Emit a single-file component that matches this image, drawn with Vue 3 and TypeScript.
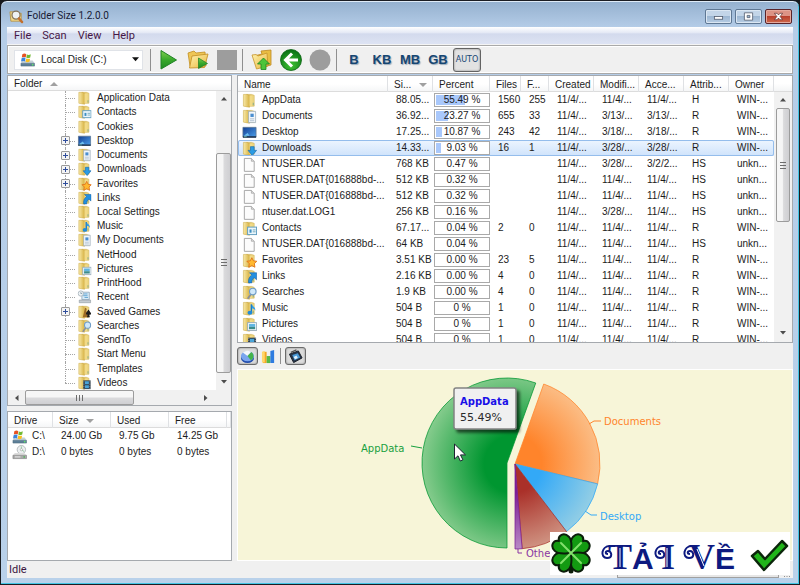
<script setup lang="ts">
interface TreeNode { name: string; overlay?: string; expandable?: boolean }
interface Entry {
  name: string; icon: string; size: string; percent: string; fill: number
  files: string; folders: string; created: string; modified: string; accessed: string; attr: string; owner: string
}
interface Slice { name: string; value: number; color: string; edge: string; cx: number; cy: number }

const tree: TreeNode[] = [
  { name: 'Application Data' },
  { name: 'Contacts', overlay: 'card' },
  { name: 'Cookies' },
  { name: 'Desktop', overlay: 'desktop', expandable: true },
  { name: 'Documents', overlay: 'doc', expandable: true },
  { name: 'Downloads', overlay: 'down', expandable: true },
  { name: 'Favorites', overlay: 'star', expandable: true },
  { name: 'Links', overlay: 'link' },
  { name: 'Local Settings' },
  { name: 'Music', overlay: 'note' },
  { name: 'My Documents', overlay: 'doc' },
  { name: 'NetHood' },
  { name: 'Pictures', overlay: 'picture' },
  { name: 'PrintHood' },
  { name: 'Recent', overlay: 'recent' },
  { name: 'Saved Games', overlay: 'game', expandable: true },
  { name: 'Searches', overlay: 'lens' },
  { name: 'SendTo' },
  { name: 'Start Menu' },
  { name: 'Templates' },
  { name: 'Videos', overlay: 'film' },
]

const row = (
  name: string, icon: string, size: string, percent: string, fill: number, files: string, folders: string,
  modified = '11/4/...', accessed = '11/4/...', attr = 'R', owner = 'WIN-...',
): Entry => ({ name, icon, size, percent, fill, files, folders, created: '11/4/...', modified, accessed, attr, owner })

const entries: Entry[] = [
  row('AppData', 'plain', '88.05...', '55.49 %', 55.49, '1560', '255', '11/4/...', '11/4/...', 'H'),
  row('Documents', 'doc', '36.92...', '23.27 %', 23.27, '655', '33', '3/13/...', '3/13/...'),
  row('Desktop', 'desktop', '17.25...', '10.87 %', 10.87, '243', '42', '3/18/...', '3/18/...'),
  row('Downloads', 'down', '14.33...', '9.03 %', 9.03, '16', '1', '3/28/...', '3/28/...'),
  row('NTUSER.DAT', 'file', '768 KB', '0.47 %', 0, '', '', '3/28/...', '3/2/2...', 'HS', 'unkn...'),
  row('NTUSER.DAT{016888bd-...', 'file', '512 KB', '0.32 %', 0, '', '', '11/4/...', '11/4/...', 'HS', 'unkn...'),
  row('NTUSER.DAT{016888bd-...', 'file', '512 KB', '0.32 %', 0, '', '', '11/4/...', '11/4/...', 'HS', 'unkn...'),
  row('ntuser.dat.LOG1', 'file', '256 KB', '0.16 %', 0, '', '', '3/28/...', '11/4/...', 'HS', 'unkn...'),
  row('Contacts', 'card', '67.17...', '0.04 %', 0, '2', '0'),
  row('NTUSER.DAT{016888bd-...', 'file', '64 KB', '0.04 %', 0, '', '', '11/4/...', '11/4/...', 'HS', 'unkn...'),
  row('Favorites', 'star', '3.51 KB', '0.00 %', 0, '23', '5'),
  row('Links', 'link', '2.16 KB', '0.00 %', 0, '4', '0'),
  row('Searches', 'lens', '1.9 KB', '0.00 %', 0, '4', '0'),
  row('Music', 'note', '504 B', '0 %', 0, '1', '0'),
  row('Pictures', 'picture', '504 B', '0 %', 0, '1', '0'),
  row('Videos', 'film', '504 B', '0 %', 0, '1', '0'),
]

const standalone = ['file', 'desktop', 'recent']
const hasFolder = (icon?: string) => !icon || !standalone.includes(icon)

const drives = [
  { name: 'C:\\', icon: 'drive-win', size: '24.00 Gb', used: '9.75 Gb', free: '14.25 Gb' },
  { name: 'D:\\', icon: 'drive-cd', size: '0 bytes', used: '0 bytes', free: '0 bytes' },
]

const slices: Slice[] = [
  { name: 'AppData', value: 55.49, color: '#009630', edge: '#84cb8c', cx: 269, cy: 93 },
  { name: 'Documents', value: 23.27, color: '#ff842b', edge: '#fbc08a', cx: 277, cy: 94 },
  { name: 'Desktop', value: 10.87, color: '#33a9f7', edge: '#98d0e4', cx: 277, cy: 94 },
  { name: 'Downloads', value: 9.03, color: '#aa3029', edge: '#d29a88', cx: 277, cy: 94 },
  { name: 'Others', value: 1.34, color: '#7c1f96', edge: '#bd93c8', cx: 277, cy: 94 },
]
const radius = 85
let angle = Math.PI
const wedges = slices.map((s) => {
  const a = angle
  const b = a + (s.value / 100) * Math.PI * 2
  angle = b
  const at = (t: number) => `${s.cx + radius * Math.sin(t)} ${s.cy - radius * Math.cos(t)}`
  return { ...s, d: `M${s.cx} ${s.cy}L${at(a)}A${radius} ${radius} 0 ${s.value > 50 ? 1 : 0} 1 ${at(b)}Z` }
})
const labels = [
  { text: 'AppData', x: 123, y: 82, color: '#17a03e', line: '173,76 184,78' },
  { text: 'Documents', x: 366, y: 55, color: '#ff842b', line: '351,54 356,51 363,51' },
  { text: 'Desktop', x: 362, y: 150, color: '#33a9f7', line: '347,141 353,145 359,145' },
  { text: 'Others', x: 288, y: 187, color: '#8a35a2', line: '280,179 280,183 284,183' },
]
const leaves = [45, 135, 225, 315]
</script>

<template>
  <svg class="defs" aria-hidden="true">
    <defs>
      <linearGradient id="gFold" x1="0" x2="1"><stop offset="0" stop-color="#f8e9a8" /><stop offset="1" stop-color="#d8b344" /></linearGradient>
      <linearGradient id="gBack" x1="0" x2="1"><stop offset="0" stop-color="#dcbb55" /><stop offset="1" stop-color="#f1dc8c" /></linearGradient>
      <linearGradient id="gPlay" x1="0" y1="0" x2="0" y2="1"><stop offset="0" stop-color="#7fd04e" /><stop offset=".5" stop-color="#39a92c" /><stop offset="1" stop-color="#1e8a22" /></linearGradient>
      <radialGradient id="gBall" cx=".5" cy=".75" r=".7"><stop offset="0" stop-color="#3fc233" /><stop offset="1" stop-color="#0b7416" /></radialGradient>
      <linearGradient id="gBlue" x1="0" y1="0" x2="1" y2="1"><stop offset="0" stop-color="#123e93" /><stop offset="1" stop-color="#4da0ea" /></linearGradient>
      <linearGradient id="gOpen" x1="0" y1="0" x2="1" y2="1"><stop offset="0" stop-color="#fff3b0" /><stop offset="1" stop-color="#e8b63c" /></linearGradient>
    </defs>
    <symbol id="folder" viewBox="0 0 16 16">
      <path d="M5 1.500h5l3 1v11.500H5z" fill="url(#gBack)" stroke="#cdab48" stroke-width=".6" />
      <path d="M1.500 1.500h4L8 3v12.200L1.500 14z" fill="url(#gFold)" stroke="#cdab48" stroke-width=".6" />
      <path d="M8 3h3v11H8z" fill="#f2da86" />
      <path d="M11.500 10.500h1v2.500h-1z" fill="#7fa98b" />
    </symbol>
    <symbol id="file" viewBox="0 0 16 16"><path d="M2.500 1.500h7.500l3 3v10.800H2.500z" fill="#fcfcfc" stroke="#a3a3a3" /><path d="M10 1.500v3h3" fill="#ddd" stroke="#a3a3a3" stroke-width=".8" /></symbol>
    <symbol id="desktop" viewBox="0 0 16 16"><path d="M1 2.500h14v10.500H1z" fill="url(#gBlue)" stroke="#56708c" stroke-width=".8" /><path d="M1 12h14v1.500H1z" fill="#1b2c44" /><path d="M2 11.500l4-3 2 3z" fill="#6fc0ef" /><rect x="2" y="12" width="3" height="1" fill="#6fb9a6" /></symbol>
    <symbol id="card" viewBox="0 0 16 16"><rect x="6" y="6.500" width="9.500" height="8" fill="#eaf6fc" stroke="#5e9cc0" /><rect x="8" y="9" width="2.200" height="3.500" fill="#3d8fc2" /><path d="M11.500 9.500h3M11.500 11.500h3" stroke="#7ab" /></symbol>
    <symbol id="doc" viewBox="0 0 16 16"><path d="M7 2.500h7.500v12H7z" fill="#f2f7fb" stroke="#9aa9b6" stroke-width=".8" /><rect x="9" y="5" width="3.500" height="3.500" fill="#4a8ed0" /><path d="M8.500 10.500h4.500M8.500 12.500h4.500" stroke="#9fb2c6" stroke-width=".8" /></symbol>
    <symbol id="down" viewBox="0 0 16 16"><path d="M9 6h4v4h2.500L11 15.500 6.500 10H9z" fill="#2b9be4" stroke="#1269ad" stroke-width=".7" /></symbol>
    <symbol id="star" viewBox="0 0 16 16"><path d="M10.500 5l1.700 3.400 3.600.4-2.600 2.600.6 3.800-3.300-1.800-3.300 1.800.6-3.800-2.600-2.600 3.600-.4z" fill="#ffb931" stroke="#dd6d17" stroke-width=".9" /></symbol>
    <symbol id="link" viewBox="0 0 16 16"><path d="M8 4h7.500v7.500L13 9.300c-2 1.400-2.600 3-2.500 5.500H7c-.5-4 .8-6.500 3.300-8.500z" fill="#238fe0" stroke="#0e5da3" stroke-width=".6" /></symbol>
    <symbol id="note" viewBox="0 0 16 16"><path d="M10 3.500v8.500" stroke="#1578c8" stroke-width="1.600" /><path d="M10.500 3.500c.5 2.500 4.500 3 3.500 7-.6-2-2-2.500-3.500-2.700z" fill="#2f9de8" /><ellipse cx="8.500" cy="12.500" rx="2.600" ry="2.200" fill="#218bda" /></symbol>
    <symbol id="picture" viewBox="0 0 16 16"><rect x="6" y="6" width="9.500" height="8.500" fill="#eef5f8" stroke="#93a9b8" stroke-width=".9" /><path d="M7.500 7.500h6.500v3H7.500z" fill="#5fb5e2" /><path d="M7.500 10.500h6.500v2.500H7.500z" fill="#3c8c8c" /></symbol>
    <symbol id="game" viewBox="0 0 16 16"><path d="M8.500 3c2 0 2.600 2 1.500 3.500l1.500 3.500 1 4H6l1-4z" fill="#9c6a24" /><path d="M12.500 5l3 4.500c0 2-1.600 2-2.200 1.500l.9 3h-3.400l.9-3c-.8.5-2 0-2-1.500z" fill="#1d1d1d" /></symbol>
    <symbol id="lens" viewBox="0 0 16 16"><path d="M9.500 10L6.500 14" stroke="#8a8f98" stroke-width="1.800" stroke-linecap="round" /><circle cx="11.500" cy="7" r="3.500" fill="#cfe8fa" stroke="#6f9cc6" stroke-width="1.200" /></symbol>
    <symbol id="film" viewBox="0 0 16 16"><rect x="6.500" y="5" width="8.500" height="10" fill="#2d3b48" /><path d="M8.500 6h4.500v3.500H8.500zM8.500 10.500h4.500v3.500H8.500z" fill="#4aa4d8" /><path d="M7.300 5.500v9M14.200 5.500v9" stroke="#b8c4cc" stroke-width=".8" stroke-dasharray="1 1" /></symbol>
    <symbol id="recent" viewBox="0 0 16 16"><path d="M5 2.500h8.500V11H5z" fill="#d8ecf8" stroke="#7f9ab0" stroke-width=".8" /><path d="M6.500 4.500h5M6.500 6.500h5M8 8.500h4" stroke="#4795cb" stroke-width=".9" /><path d="M2 11.500h13v3H2z" fill="#c5ccd2" stroke="#8f999f" stroke-width=".7" /><circle cx="3.800" cy="4" r="3" fill="#eef3f6" stroke="#9aa7b0" stroke-width=".8" /><path d="M3.800 2.500V4h1.500" stroke="#578" stroke-width=".7" fill="none" /></symbol>
    <symbol id="drive-win" viewBox="0 0 16 16"><path d="M2.500 9h11l2 3H1z" fill="#c5d0d8" /><path d="M1 12h14.500v3H1z" fill="#5d7f98" stroke="#496879" stroke-width=".5" /><circle cx="13.500" cy="13.500" r=".9" fill="#5fe06b" /><path d="M2.500 2.500c1.500-1 3-1 4.200-.2l-.6 3.500c-1.300-.7-2.700-.6-4.200.1z" fill="#e65222" /><path d="M7.300 2.600c1.300.7 2.700.6 4.200-.1l-.6 3.400c-1.400.8-2.900.9-4.200.2z" fill="#72b933" /><path d="M1.700 6.700c1.500-.9 3-.9 4.200-.2l-.6 3.500c-1.300-.7-2.700-.6-4.200.1z" fill="#3a84dc" /><path d="M6.600 6.900c1.300.7 2.700.6 4.200-.1l-.6 3.400c-1.400.8-2.900.9-4.200.2z" fill="#fbbf1c" /></symbol>
    <symbol id="drive-cd" viewBox="0 0 16 16"><circle cx="10" cy="5" r="4.500" fill="#eceff0" stroke="#a5abae" stroke-width=".8" /><path d="M10 5V1.500M10 5l3 2" stroke="#8fc79a" /><circle cx="10" cy="5" r="1.200" fill="#fff" stroke="#999" stroke-width=".6" /><path d="M3 8.500h10l2.500 2.500H1z" fill="#dcdcdc" /><path d="M1 11h14.500v3.500H1z" fill="#a9a9a9" stroke="#7a7a7a" stroke-width=".6" /><path d="M3 12.700h6" stroke="#eee" /><circle cx="13" cy="12.700" r=".9" fill="#54b35c" /></symbol>
    <symbol id="open" viewBox="0 0 22 22"><path d="M1 4l6-2 2 2 9-1 1 14H3z" fill="#eec655" stroke="#c28e20" stroke-width=".8" /><path d="M5 7l16-2-3.500 13.500L2.500 19z" fill="url(#gOpen)" stroke="#c6932a" stroke-width=".9" /></symbol>
  </svg>

  <div class="window">
    <header class="title">
      <svg class="app-icon" viewBox="0 0 16 16"><path d="M1 3h5l1 1.500h6V13H2z" fill="#f1d98b" stroke="#b08a3a" stroke-width=".8" /><circle cx="7.500" cy="6.500" r="4.300" fill="#eef2f4" stroke="#82725a" stroke-width="1.300" /><path d="M10.500 10l3.500 4" stroke="#c2702e" stroke-width="2.500" stroke-linecap="round" /></svg>
      <h1>Folder Size 1.2.0.0</h1>
      <button class="win-btn" aria-label="Minimize"><svg viewBox="0 0 12 12"><rect x="1.500" y="6" width="9" height="3" fill="#fff" stroke="#555f70" stroke-width=".9" /></svg></button>
      <button class="win-btn" aria-label="Maximize"><svg viewBox="0 0 12 12"><path d="M1.500 2h9v8h-9zM4.500 4.800v2.400h3V4.800z" fill="#fff" fill-rule="evenodd" stroke="#555f70" stroke-width=".9" /></svg></button>
      <button class="win-btn close" aria-label="Close"><svg viewBox="0 0 12 12"><path d="M1.500 2.500h3L6 4.300l1.500-1.800h3L7.800 6l2.700 3.500h-3L6 7.700 4.500 9.500h-3L4.200 6z" fill="#fff" stroke="#5e3030" stroke-width=".8" /></svg></button>
    </header>

    <nav class="menu"><button>File</button><button>Scan</button><button>View</button><button>Help</button></nav>

    <div class="toolbar">
      <label class="combo">
        <svg class="ico" viewBox="0 0 16 16"><use href="#drive-win" /></svg>
        <select aria-label="Drive"><option>Local Disk (C:)</option></select>
        <svg class="arrow" viewBox="0 0 6 4"><path d="M0 0h6L3 3.500z" fill="#111" /></svg>
      </label>
      <i class="sep"></i>
      <button class="tool" aria-label="Start scan"><svg viewBox="0 0 22 22"><path d="M3 1.500v18.500L18.500 11z" fill="url(#gPlay)" stroke="#208326" stroke-linejoin="round" /></svg></button>
      <button class="tool" aria-label="Scan folder"><svg viewBox="0 0 22 22"><use href="#open" /><path d="M11.500 9v10.500L20.500 14.500z" fill="url(#gPlay)" stroke="#1e7d24" stroke-width=".7" /></svg></button>
      <button class="tool" aria-label="Stop"><svg viewBox="0 0 22 22"><rect x="1" y="1" width="20" height="20" fill="#9d9d9d" /></svg></button>
      <i class="sep mid"></i>
      <button class="tool" aria-label="Parent folder"><svg viewBox="0 0 22 22"><path d="M3 7l8-2-1-3 10-1v15l-8 2z" fill="#e9bd43" stroke="#bd8820" stroke-width=".8" /><path d="M1 6l4-.5 2 1.500 9-3 1 13-11.500 3z" fill="url(#gOpen)" stroke="#c6932a" stroke-width=".8" /><path d="M12.500 9l6 6h-3.500v5.500h-5V15H6.500z" fill="#4cc43a" stroke="#1c8322" stroke-width=".8" /></svg></button>
      <button class="tool" aria-label="Back"><svg viewBox="0 0 22 22"><circle cx="11" cy="11" r="10.500" fill="url(#gBall)" stroke="#0b6514" stroke-width=".8" /><path d="M12 4.500L5.500 11l6.500 6.500M6.500 11H18" fill="none" stroke="#fff" stroke-width="3" /></svg></button>
      <button class="tool" aria-label="Forward"><svg viewBox="0 0 22 22"><circle cx="11" cy="11" r="10.500" fill="#9d9d9d" /></svg></button>
      <i class="sep tight"></i>
      <button class="unit">B</button><button class="unit">KB</button><button class="unit">MB</button><button class="unit">GB</button>
      <button class="unit auto">AUTO</button>
    </div>

    <main class="workspace">
      <aside class="side">
        <section class="panel tree-panel">
          <div class="tree-head">Folder <svg class="sort" viewBox="0 0 8 4"><path d="M4 0l4 4H0z" fill="#a0a0a0" /></svg></div>
          <div class="tree-body">
            <ul class="tree">
              <li v-for="n in tree" :key="n.name">
                <span class="branch"><button v-if="n.expandable" class="plus" :aria-label="'Expand ' + n.name"></button></span>
                <svg class="ico" viewBox="0 0 16 16"><use v-if="hasFolder(n.overlay)" href="#folder" /><use v-if="n.overlay" :href="'#' + n.overlay" /></svg>
                <span>{{ n.name }}</span>
              </li>
            </ul>
            <div class="vbar tree-v">
              <svg class="tip" viewBox="0 0 6 4"><path d="M3 0l3 3.500H0z" /></svg>
              <i class="before"></i><i class="thumb"><b></b></i>
              <svg class="tip" viewBox="0 0 6 4"><path d="M0 0h6L3 3.500z" /></svg>
            </div>
          </div>
          <div class="hbar">
            <svg class="tip" viewBox="0 0 4 6"><path d="M3.500 0v6L0 3z" /></svg>
            <i class="thumb"><b></b></i><i class="after"></i>
            <svg class="tip" viewBox="0 0 4 6"><path d="M0 0v6l3.500-3z" /></svg>
          </div>
        </section>

        <section class="panel drives">
          <table>
            <colgroup><col class="d1"><col class="d2"><col class="d2"><col class="d2"><col></colgroup>
            <thead><tr><th>Drive</th><th>Size <svg class="sort" viewBox="0 0 8 4"><path d="M0 0h8L4 4z" fill="#a0a0a0" /></svg></th><th>Used</th><th>Free</th><th></th></tr></thead>
            <tbody>
              <tr v-for="d in drives" :key="d.name">
                <td><span class="named"><svg class="ico" viewBox="0 0 16 16"><use :href="'#' + d.icon" /></svg>{{ d.name }}</span></td>
                <td>{{ d.size }}</td><td>{{ d.used }}</td><td>{{ d.free }}</td><td></td>
              </tr>
            </tbody>
          </table>
        </section>
      </aside>

      <section class="detail">
        <div class="panel list">
          <table>
            <colgroup><col><col class="c-date"><col class="c-pct"><col class="c-files"><col class="c-fold"><col class="c-date"><col class="c-date"><col class="c-date"><col class="c-date"><col class="c-date"></colgroup>
            <thead>
              <tr><th>Name</th><th>Si... <svg class="sort" viewBox="0 0 8 4"><path d="M0 0h8L4 4z" fill="#a0a0a0" /></svg></th><th>Percent</th><th>Files</th><th>F...</th><th>Created</th><th>Modifi...</th><th>Acce...</th><th>Attrib...</th><th>Owner</th></tr>
            </thead>
            <tbody>
              <tr v-for="(e, i) in entries" :key="i" :class="{ selected: i === 3 }">
                <td><span class="named"><svg class="ico" viewBox="0 0 16 16"><use v-if="hasFolder(e.icon)" href="#folder" /><use v-if="e.icon !== 'plain'" :href="'#' + e.icon" /></svg>{{ e.name }}</span></td>
                <td>{{ e.size }}</td>
                <td class="pct"><span class="meter"><i v-if="e.fill" :style="{ width: e.fill + '%' }"></i><em>{{ e.percent }}</em></span></td>
                <td>{{ e.files }}</td><td>{{ e.folders }}</td><td>{{ e.created }}</td><td>{{ e.modified }}</td><td>{{ e.accessed }}</td><td>{{ e.attr }}</td><td>{{ e.owner }}</td>
              </tr>
            </tbody>
          </table>
          <div class="list-side">
            <div class="stub"></div>
            <div class="vbar list-v">
              <svg class="tip" viewBox="0 0 6 4"><path d="M3 0l3 3.500H0z" /></svg>
              <i class="thumb"><b></b></i><i class="after"></i>
              <svg class="tip" viewBox="0 0 6 4"><path d="M0 0h6L3 3.500z" /></svg>
            </div>
          </div>
        </div>

        <div class="chart-tools">
          <button class="mode on" aria-label="Pie chart"><svg viewBox="0 0 16 16"><ellipse cx="8" cy="9.500" rx="7" ry="5.500" fill="#244fae" /><ellipse cx="8" cy="7.500" rx="7" ry="5.500" fill="#7aa5ee" /><path d="M8 7.500L3 3.600A7 5.500 0 0 1 12 3.200z" fill="#f4f7fa" /><path d="M8 7.500l4-4.300a7 5.500 0 0 1-.5 8.700z" fill="#45b34b" /></svg></button>
          <button class="mode" aria-label="Bar chart"><svg viewBox="0 0 16 16"><path d="M2 3h4v12H2z" fill="#f5a623" /><path d="M6 7.500h4V15H6z" fill="#58b947" /><path d="M10 2l4-1v14h-4z" fill="#2e7be0" /><path d="M1 3l3-1v12.500H1z" fill="#ffd66b" /></svg></button>
          <i class="sep"></i>
          <button class="mode on" aria-label="Save chart"><svg viewBox="0 0 16 16"><path d="M1.500 5.500L11 2l4 7.500L6 14.500z" fill="#27364a" stroke="#131a22" /><path d="M4.500 6.500l6-2 2.500 4.500-6 3z" fill="#4b9bd8" /><path d="M6 8.500l3-1.500 1.500 2.500-3 1.500z" fill="#e3f3fd" /><path d="M3 3.500l6-2.500" stroke="#555" stroke-width="1.500" /></svg></button>
        </div>

        <div class="chart">
          <svg viewBox="0 0 554 190" role="img" aria-label="Share of each folder">
            <defs>
              <radialGradient v-for="w in wedges" :id="'w' + w.name" :key="w.name" gradientUnits="userSpaceOnUse" cx="275" cy="94" r="90">
                <stop offset=".32" :stop-color="w.color" /><stop offset="1" :stop-color="w.edge" />
              </radialGradient>
              <filter id="drop" x="-20%" y="-20%" width="150%" height="150%"><feDropShadow dx="3" dy="3" stdDeviation="1.500" flood-opacity=".6" /></filter>
            </defs>
            <path v-for="w in wedges" :key="w.name" :d="w.d" :fill="'url(#w' + w.name + ')'" :stroke="w.color" stroke-opacity=".75" stroke-linejoin="round" />
            <g v-for="l in labels" :key="l.text">
              <polyline :points="l.line" fill="none" :stroke="l.color" />
              <text :x="l.x" :y="l.y" :fill="l.color">{{ l.text }}</text>
            </g>
            <rect x="216" y="18" width="62" height="41" rx="2" fill="#f0f0f0" stroke="#828282" stroke-width="1.500" filter="url(#drop)" />
            <text class="tt-name" x="222" y="35">AppData</text>
            <text class="tt-val" x="222" y="51">55.49%</text>
            <path d="M216.500 74v15l3.500-3.200 2.300 5.200 2.600-1.200-2.400-4.900h5z" fill="#fff" stroke="#1d2433" stroke-linejoin="round" />
          </svg>
        </div>
      </section>
    </main>

    <footer class="status"><span>Idle</span><i class="progress"></i><svg class="grip" viewBox="0 0 8 8"><path d="M6 1h1v1H6zM3.500 3.500h1v1h-1zM6 3.500h1v1H6zM1 6h1v1H1zM3.500 6h1v1h-1zM6 6h1v1H6z" fill="#8f8f8f" /></svg></footer>

    <a class="banner" href="#">
      <svg viewBox="0 0 240 43">
        <path d="M21 22v17" stroke="#0b1d0b" stroke-width="5" stroke-linecap="round" />
        <path v-for="a in leaves" :key="a" :transform="`translate(21 21) rotate(${a})`" d="M0 0C-3-3-10-7-10-13C-10-20-3-22 0-17C3-22 10-20 10-13C10-7 3-3 0 0Z" fill="#139a12" stroke="#0b1d0b" stroke-width="2" stroke-linejoin="round" />
        <path d="M21 21L11 11M21 21L31 11M21 21L11 31M21 21L31 31" fill="none" stroke="#83e06c" stroke-width="2" stroke-linecap="round" />
        <g class="swash">
          <path d="M65 14h-5c-9 0-10 12-3 12 6 0 5-7 1-7-3 0-3 3 0 3" />
          <path d="M119 14h-6c-9 0-10 12-3 12 6 0 5-7 1-7-3 0-3 3 0 3" />
          <path d="M146 14h-4c-9 0-10 12-3 12 6 0 5-7 1-7-3 0-3 3 0 3" />
        </g>
        <text class="word" y="37"><tspan class="fancy" x="58">T</tspan><tspan class="block" x="82">Ả</tspan><tspan class="fancy" x="111">I</tspan> <tspan class="fancy" x="139">V</tspan><tspan class="block" x="165">Ề</tspan></text>
        <path d="M70 16v19M117 16v19M147 17l7 17" stroke="#fff" stroke-width="1" fill="none" />
        <path d="M202 24l6-5 7 8 17-18 5 5-23 24z" fill="#20b51a" stroke="#0b260b" stroke-width="2.500" stroke-linejoin="round" />
      </svg>
    </a>
  </div>
</template>

<style>
body { margin: 0; background: #16181c; }
</style>

<style scoped>
* { box-sizing: border-box; }
.defs { position: absolute; width: 0; height: 0; }
button { border: 0; background: none; padding: 0; margin: 0; font: inherit; color: inherit; display: flex; align-items: center; justify-content: center; }
svg { display: block; flex: none; }
.window {
  position: relative; display: flex; flex-direction: column; height: 100vh; padding: 0 6px 6px;
  border: 1px solid #1b1d22; border-radius: 7px 7px 0 0;
  background: linear-gradient(#94b0ce, #b5cde8 27px, #b9d1ea);
  box-shadow: inset -1px -1px #43c5e4, inset 0 1px #dfebf7;
  font: 10px/16px "Liberation Sans", Arial, sans-serif; color: #1c1c1c;
}
.title { display: flex; align-items: center; height: 26px; padding: 4px 1px 0 2px; gap: 3px; font: 10px/16px Roboto, "Open Sans", sans-serif; color: #181a33; }
.title h1 { flex: 1; margin: 0; font: inherit; }
.app-icon { width: 15px; height: 15px; }
.win-btn { width: 27px; height: 15px; border: 1px solid #5f7894; border-radius: 2px; background: linear-gradient(#c3d5e8 45%, #9db7d2 50%, #b7cde4); box-shadow: inset 0 0 0 1px #dbe7f3; }
.win-btn.close { border-color: #59242a; background: linear-gradient(#dc9385 45%, #b9402d 50%, #cf6a4c); box-shadow: inset 0 0 0 1px #e5aa9e; }
.win-btn svg { width: 11px; height: 11px; }
.menu { display: flex; align-items: center; gap: 11px; height: 18px; padding-left: 7px; background: linear-gradient(#fff, #e3e8f5 35%, #d3daed 40%, #dde3f3); border-bottom: 1px solid #f4f4f4; font: 11px/16px Roboto, "Open Sans", sans-serif; color: #471746; }
.toolbar { display: flex; align-items: center; height: 29px; margin-bottom: 1px; padding: 0 6px; background: #f0f0f0; border: 1px solid #a9a9a9; box-shadow: inset 0 0 0 1px #fff; }
.combo { position: relative; display: flex; align-items: center; width: 129px; height: 20px; padding-left: 5px; background: #fff; border: 1px solid #e0e3e8; }
.combo select { flex: 1; border: 0; padding: 0 0 0 6px; background: transparent; appearance: none; font: inherit; color: inherit; outline: 0; }
.combo .arrow { width: 7px; height: 5px; margin-right: 3px; }
.ico { width: 15px; height: 15px; }
.sep { width: 1px; height: 22px; margin: 0 6px 0 7px; background: #8f8f8f; }
.sep.mid { margin: 0 7px 0 3px; }
.sep.tight { margin: 0 3px 0 4px; }
.tool { width: 24px; height: 24px; margin-right: 5px; }
.tool svg { width: 22px; height: 22px; }
.toolbar .tool:has(+ .sep) { margin-right: 0; }
.unit { min-width: 28px; height: 24px; font: bold 13px/16px "Liberation Sans", Arial, sans-serif; color: #154672; text-shadow: 1px 1px 1px #9aa9b8; }
.unit.auto { margin-left: 1px; border: 1px solid #636363; border-radius: 3px; background: #e2e2e2; box-shadow: inset 0 0 2px #777; font: 8px/16px "DejaVu Sans", sans-serif; text-shadow: none; }
.workspace { flex: 1; min-height: 0; display: grid; grid-template-columns: 225px 1fr; gap: 5px; background: #f0f0f0; }
.side { min-height: 0; display: grid; grid-template-rows: 1fr 150px; gap: 5px; }
.detail { min-width: 0; min-height: 0; display: grid; grid-template-rows: 268px 26px 1fr; }
.panel { min-width: 0; min-height: 0; background: #fff; border: 1px solid #a5a9ae; overflow: hidden; }
.tree-panel { display: flex; flex-direction: column; }
.tree-head { display: flex; align-items: center; gap: 8px; height: 15px; padding: 2px 6px 0; border-bottom: 1px solid #dcdcdc; background: linear-gradient(#fff 50%, #f5f6f7); }
.sort { display: inline-block; width: 8px; height: 4px; vertical-align: 1px; margin-left: 5px; }
.tree-head .sort { margin: 0; }
.tree-body { flex: 1; min-height: 0; display: flex; }
.tree { flex: 1; margin: 0; padding: 0; list-style: none; display: grid; grid-auto-rows: 1fr; }
.tree li { display: flex; align-items: center; min-height: 0; padding-left: 52px; line-height: 14px; }
.tree span:last-child { margin-left: 5px; }
.tree .ico { width: 15px; height: 14px; }
.branch { position: relative; width: 17px; align-self: stretch; display: flex; align-items: center; }
.branch::before { content: ""; position: absolute; left: 5px; top: 0; bottom: 0; border-left: 1px dotted #a5a5a5; }
.branch::after { content: ""; position: absolute; left: 5px; right: 2px; top: 50%; border-top: 1px dotted #a5a5a5; }
.tree li:last-child .branch::before { bottom: 50%; }
.plus { position: relative; z-index: 1; width: 9px; height: 9px; margin-left: 1px; border: 1px solid #9a9a9a; border-radius: 1px; background: linear-gradient(#2f4d9b, #2f4d9b) center / 5px 1px no-repeat, linear-gradient(#2f4d9b, #2f4d9b) center / 1px 5px no-repeat, #f4f4f4; }
.tip { width: 6px; height: 4px; margin: auto; fill: #4c4c4c; }
.vbar { width: 15px; display: grid; justify-items: stretch; background: #f1f1f1; }
.tree-v { grid-template-rows: 16px 46fr 221fr 17px; }
.list-v { flex: 1; grid-template-rows: 16px 115fr 103fr 17px; width: 18px; padding: 0 2px; }
.thumb { display: flex; align-items: center; justify-content: center; border: 1px solid #9c9c9c; border-radius: 2px; background: linear-gradient(90deg, #f6f6f6 45%, #dadadc 55%, #cfcfd2); }
.thumb b { width: 6px; height: 7px; background: repeating-linear-gradient(#6d6d6d 0 1px, transparent 1px 3px); }
.hbar { display: grid; grid-template-columns: 17px 110fr 64fr 17px 16px; height: 15px; background: #f1f1f1; }
.hbar .tip { width: 4px; height: 6px; }
.hbar .thumb { background: linear-gradient(#f6f6f6 45%, #dadadc 55%, #cfcfd2); }
.hbar .thumb b { width: 7px; height: 6px; background: repeating-linear-gradient(90deg, #6d6d6d 0 1px, transparent 1px 3px); }
table { width: 100%; table-layout: fixed; border-collapse: separate; border-spacing: 0; }
th { height: 16px; padding: 0 0 0 6px; text-align: left; font-weight: normal; line-height: 15px; border-right: 1px solid #dfe1e4; background: linear-gradient(#fff 50%, #f4f5f6); box-shadow: inset 0 -1px #dcdcdc; white-space: nowrap; overflow: hidden; }
td { height: 16px; padding: 0 0 0 8px; white-space: nowrap; overflow: hidden; line-height: 16px; }
td:first-child { padding-left: 4px; }
.named { display: flex; align-items: center; gap: 5px; }
.d1 { width: 45px; }
.d2 { width: 58px; }
.list { display: flex; align-items: flex-start; }
.list table { flex: 1; min-width: 0; width: auto; }
.list-side { align-self: stretch; display: flex; flex-direction: column; width: 18px; }
.stub { height: 16px; background: linear-gradient(#fff 50%, #f4f5f6); border-bottom: 1px solid #dcdcdc; }
.c-pct { width: 57px; }
.c-files { width: 31px; }
.c-fold { width: 28px; }
.c-date { width: 45px; }
.list td.pct { padding: 0 0 0 1px; }
.meter { position: relative; display: flex; width: 56px; height: 14px; padding: 1px; border: 1px solid #a9a9a9; background: #fff; }
.meter i { background: #a9c8fb; }
.meter em { position: absolute; inset: 0; text-align: center; line-height: 12px; font-style: normal; }
.selected { background: linear-gradient(#edf5ff, #cfe3fb); outline: 1px solid #94bdec; outline-offset: -1px; border-radius: 2px; }
.chart-tools { display: flex; align-items: center; }
.mode { width: 21px; height: 18px; border: 1px solid transparent; border-radius: 3px; }
.mode svg { width: 15px; height: 15px; }
.mode.on { border-color: #6b6b6b; background: #dcdcdc; box-shadow: inset 0 0 2px #777; }
.chart-tools .sep { height: 16px; margin: 0 4px 0 1px; }
.chart { min-height: 0; border: 1px solid #fff; background: #f7f5d8; }
.chart svg { width: 100%; height: 100%; font: 10px "DejaVu Sans", Verdana, sans-serif; }
.tt-name { font-weight: bold; fill: #1a10e8; }
.tt-val { font-size: 11px; fill: #2a2a2a; }
.status { display: flex; align-items: center; height: 17px; padding: 0 2px; background: #f0f0f0; font: 11px/16px Roboto, "Open Sans", sans-serif; color: #3a173f; }
.status span { flex: 1; }
.progress { width: 162px; height: 14px; margin-right: 4px; border: 1px solid #a0a0a0; background: #e6e6e6; align-self: flex-end; }
.grip { width: 8px; height: 8px; align-self: flex-end; }
.banner { position: absolute; right: 9px; bottom: 9px; width: 240px; height: 43px; background: #fff; }
.banner svg { width: 100%; height: 100%; }
.word { fill: #0d1a80; font-weight: bold; }
.fancy { font: bold 36px "Liberation Serif", "Times New Roman", serif; }
.block { font: bold 30px "Liberation Sans", Arial, sans-serif; }
.swash path { fill: none; stroke: #0d1a80; stroke-width: 2; }
</style>
